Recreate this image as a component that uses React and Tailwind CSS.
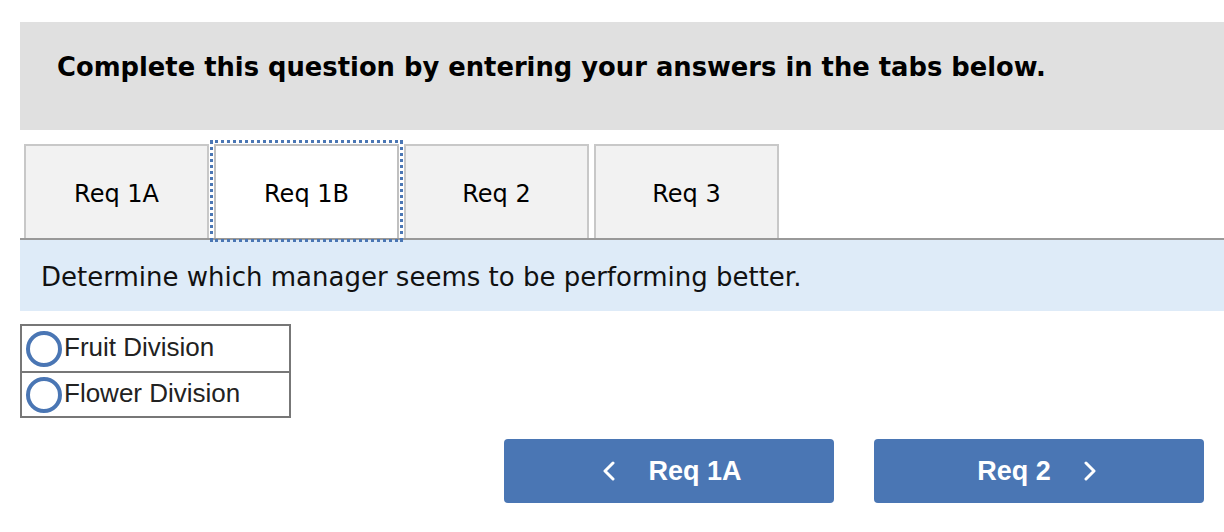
import React, { useState } from 'react';

const tabs = ['Req 1A', 'Req 1B', 'Req 2', 'Req 3'];
const options = ['Fruit Division', 'Flower Division'];

function Chevron({ dir }) {
    return (
        <svg width="14" height="20" viewBox="0 0 14 20" fill="none" stroke="white" strokeWidth="3" strokeLinecap="round" strokeLinejoin="round">
            {dir === 'left' ? <path d="M11 2 L3 10 L11 18" /> : <path d="M3 2 L11 10 L3 18" />}
        </svg>
    );
}

export default function App() {
    const [active, setActive] = useState(1);
    const [choice, setChoice] = useState(null);

    return (
        <div className="w-[1224px] h-[532px] overflow-hidden bg-white pt-[22px] pl-[20px]" style={{ fontFamily: '"DejaVu Sans", Verdana, sans-serif' }}>
            <div className="h-[108px] bg-[#e0e0e0] flex items-center pl-[37px] pb-[18px]">
                <h1 className="text-[25.8px] font-bold text-black">
                    Complete this question by entering your answers in the tabs below.
                </h1>
            </div>

            <div className="mt-[14px] flex items-end pl-[4px] gap-[5px] border-b-2 border-[#999] h-[96px]">
                {tabs.map((t, i) => (
                    <button
                        key={t}
                        onClick={() => setActive(i)}
                        className={
                            i === active
                                ? 'w-[185px] h-[94px] pt-[4px] border-2 border-[#c0c0c0] border-b-0 bg-white text-[24px] text-black outline-[3px] outline-dotted outline-[#4a76b4] outline-offset-[1px]'
                                : 'w-[185px] h-[94px] pt-[4px] border-2 border-[#c8c8c8] border-b-0 bg-[#f2f2f2] text-[24px] text-black'
                        }
                    >
                        {t}
                    </button>
                ))}
            </div>

            <div className="h-[71px] bg-[#deebf8] flex items-center pl-[21px] pt-[3px]">
                <p className="text-[26px] text-[#111]">Determine which manager seems to be performing better.</p>
            </div>

            <div className="mt-[13px] w-[271px] border-2 border-[#777]" style={{ fontFamily: '"Liberation Sans", Arial, sans-serif' }}>
                {options.map((o, i) => (
                    <label
                        key={o}
                        className={'flex items-center h-[45px] pl-[4px] gap-[2px] cursor-pointer ' + (i > 0 ? 'border-t-2 border-[#777]' : '')}
                        onClick={() => setChoice(i)}
                    >
                        <span className="w-[36px] h-[36px] rounded-full border-[4px] border-[#4a76b4] flex items-center justify-center shrink-0">
                            {choice === i && <span className="w-[16px] h-[16px] rounded-full bg-[#4a76b4]" />}
                        </span>
                        <span className="text-[26px] text-[#222] -mt-[3px]">{o}</span>
                    </label>
                ))}
            </div>

            <div className="mt-[21px] flex pl-[484px] gap-[40px]" style={{ fontFamily: '"Liberation Sans", Arial, sans-serif' }}>
                <button className="w-[330px] h-[64px] rounded-[4px] bg-[#4a76b4] flex items-center justify-center gap-[32px] text-white text-[27px] font-bold pl-[6px]">
                    <Chevron dir="left" />
                    <span>Req 1A</span>
                </button>
                <button className="w-[330px] h-[64px] rounded-[4px] bg-[#4a76b4] flex items-center justify-center gap-[32px] text-white text-[27px] font-bold pr-[4px]">
                    <span>Req 2</span>
                    <Chevron dir="right" />
                </button>
            </div>
        </div>
    );
}
